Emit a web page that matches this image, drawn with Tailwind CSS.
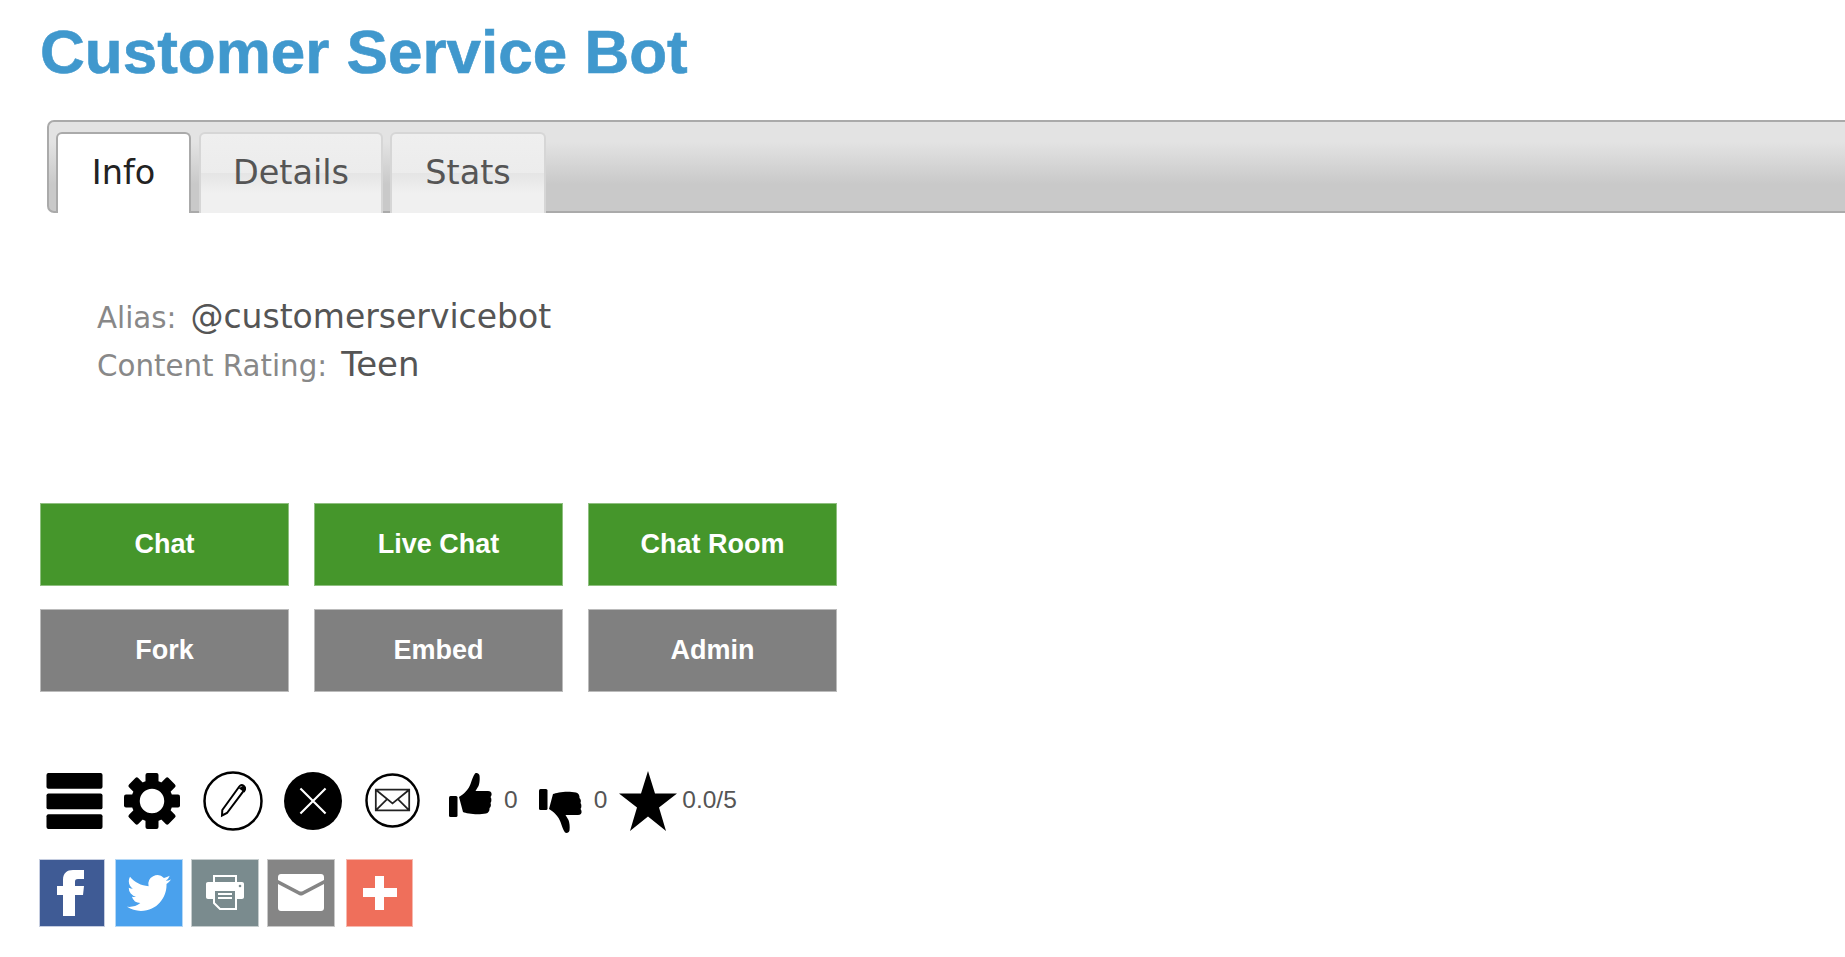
<!DOCTYPE html>
<html lang="en">
<head>
    <meta charset="UTF-8">
    <title>Customer Service Bot</title>
    <script src="https://cdn.jsdelivr.net/npm/@tailwindcss/browser@4"></script>
</head>
<body class="bg-white overflow-hidden font-['Liberation_Sans',sans-serif]">
    <div class="pl-[40px] pt-[17px]">
        <h1 class="text-[62px] leading-[69px] font-bold text-[#4098cd] [-webkit-text-stroke:0.6px_#4098cd]">Customer Service Bot</h1>

        <!-- Tabs -->
        <div class="ml-[7px] mr-[-10px] mt-[34px] h-[93px] flex gap-[8px] pl-[7px] pt-[10px] border-2 border-[#aaaaaa] rounded-[7px] bg-[linear-gradient(#e3e3e3_0%,#e3e3e3_22%,#c9c9c9_70%,#c9c9c9_100%)] font-['DejaVu_Sans',sans-serif] text-[33.500px]">
            <a class="w-[135px] h-[81px] flex items-center justify-center bg-white border-2 border-b-0 border-[#aaaaaa] rounded-t-[6px] text-[#222222]">Info</a>
            <a class="w-[184px] h-[81px] flex items-center justify-center bg-[linear-gradient(#efefef_0%,#ececec_50%,#e5e5e5_50%,#f0f0f0_75%,#f0f0f0_100%)] border-2 border-b-0 border-[#d6d6d6] rounded-t-[6px] text-[#555555]">Details</a>
            <a class="-ml-[1px] w-[156px] h-[81px] flex items-center justify-center bg-[linear-gradient(#efefef_0%,#ececec_50%,#e5e5e5_50%,#f0f0f0_75%,#f0f0f0_100%)] border-2 border-b-0 border-[#d6d6d6] rounded-t-[6px] text-[#555555]">Stats</a>
        </div>

        <!-- Info -->
        <div class="pl-[57px] pt-[81px] font-['DejaVu_Sans',sans-serif] text-[#555555] text-[33px] leading-[46px]">
            <div class="flex items-baseline gap-[14px]"><span class="text-[29.300px] text-[#888888]">Alias:</span><span>@customerservicebot</span></div>
            <div class="flex items-baseline gap-[14px]"><span class="text-[29.300px] text-[#888888]">Content Rating:</span><span class="text-[34px]">Teen</span></div>
        </div>

        <!-- Buttons -->
        <div class="mt-[113.500px] grid grid-cols-[249px_249px_249px] gap-x-[25px] gap-y-[23px] text-[27px] font-bold text-white">
            <a class="h-[83px] flex items-center justify-center bg-[#45962b] border border-[#8fbf80]">Chat</a>
            <a class="h-[83px] flex items-center justify-center bg-[#45962b] border border-[#8fbf80]">Live Chat</a>
            <a class="h-[83px] flex items-center justify-center bg-[#45962b] border border-[#8fbf80]">Chat Room</a>
            <a class="h-[83px] flex items-center justify-center bg-[#808080] border border-[#bbbbbb]">Fork</a>
            <a class="h-[83px] flex items-center justify-center bg-[#808080] border border-[#bbbbbb]">Embed</a>
            <a class="h-[83px] flex items-center justify-center bg-[#808080] border border-[#bbbbbb]">Admin</a>
        </div>

        <!-- Action icons -->
        <div class="mt-[77px] h-[64px] flex items-center text-[24.500px] text-[#555555]">
            <svg class="ml-[6px] w-[57px] h-[57px]" viewBox="0 0 57 58"><rect x="0" y="1" width="57" height="16" rx="2"/><rect x="0" y="22" width="57" height="16" rx="2"/><rect x="0" y="43" width="57" height="15" rx="2"/></svg>
            <svg class="ml-[21px] w-[56px] h-[58px]" viewBox="0 0 56 56"><g transform="translate(28 28)"><circle r="16.500" fill="none" stroke="#000" stroke-width="8.500"/><rect x="-6.500" y="-28" width="13" height="11" rx="2"/><rect x="-6.500" y="-28" width="13" height="11" rx="2" transform="rotate(45)"/><rect x="-6.500" y="-28" width="13" height="11" rx="2" transform="rotate(90)"/><rect x="-6.500" y="-28" width="13" height="11" rx="2" transform="rotate(135)"/><rect x="-6.500" y="-28" width="13" height="11" rx="2" transform="rotate(180)"/><rect x="-6.500" y="-28" width="13" height="11" rx="2" transform="rotate(225)"/><rect x="-6.500" y="-28" width="13" height="11" rx="2" transform="rotate(270)"/><rect x="-6.500" y="-28" width="13" height="11" rx="2" transform="rotate(315)"/></g></svg>
            <svg class="ml-[23px] w-[60px] h-[60px]" viewBox="0 0 60 60"><circle cx="30" cy="30" r="28.500" fill="none" stroke="#000" stroke-width="2.500"/><path d="M19 44.500l.3-5.500 17-23.500c1.200-1.600 3-1.800 4.400-.8s1.600 2.900.5 4.400L24 42z" fill="none" stroke="#000" stroke-width="2"/><path d="M35.500 17l6 4.400 1-1.600c1-1.600.7-3.300-.6-4.300s-3-.8-4.200.7z"/></svg>
            <svg class="ml-[21px] w-[58px] h-[58px]" viewBox="0 0 60 60"><circle cx="30" cy="30" r="30"/><path d="M17 17l26 26M43 17L17 43" stroke="#fff" stroke-width="2.200"/></svg>
            <svg class="ml-[23px] w-[55px] h-[55px]" viewBox="0 0 56 56"><circle cx="28" cy="28" r="26.500" fill="none" stroke="#000" stroke-width="2.500"/><path d="M11 17h34v21H11zM11 17l17 14 17-14M11 38l11-11M45 38L34 27" fill="none" stroke="#222" stroke-width="1.800"/></svg>
            <svg class="ml-[29px] w-[44px] h-[46px] self-start mt-[4px]" viewBox="0 0 44 46"><rect x="0" y="23" width="8.500" height="21" rx="1.500"/><path d="M10 24C15 21 20 16 21.500 11 23 7 24 3 26 .5c2-1 4 0 4.500 2 .5 4 0 8-1 10.500l-3 5h12.500c2.500 0 4 1.500 3.500 4-.2 1-.6 1.500-1 2 1.200 1.500 1.200 4.500 0 6 .8 2 .3 4-1 5 .3 2.500-1 5-3.500 5.500-5 1-12 1-17 0-3-.5-4.500-1-6-1.500z"/></svg>
            <span class="ml-[11px]">0</span>
            <svg class="ml-[21px] w-[44px] h-[46px] self-start mt-[19px]" viewBox="0 0 44 46"><g transform="matrix(1 0 0 -1 0 45)"><rect x="0" y="23" width="8.500" height="21" rx="1.500"/><path d="M10 24C15 21 20 16 21.500 11 23 7 24 3 26 .5c2-1 4 0 4.500 2 .5 4 0 8-1 10.500l-3 5h12.500c2.500 0 4 1.500 3.500 4-.2 1-.6 1.500-1 2 1.200 1.500 1.200 4.500 0 6 .8 2 .3 4-1 5 .3 2.500-1 5-3.500 5.500-5 1-12 1-17 0-3-.5-4.500-1-6-1.500z"/></g></svg>
            <span class="ml-[11px]">0</span>
            <svg class="ml-[12px] w-[58px] h-[60px]" viewBox="0 0 58 60"><path d="M29 0l7 22.500h22l-18 14 7 23.500-18-14.500L11 60l7-23.500-18-14h22z"/></svg>
            <span class="ml-[5px]">0.0/5</span>
        </div>

        <!-- Share icons -->
        <div class="mt-[26px] -ml-[1px] flex">
            <a class="w-[66px] h-[68px] bg-[#3f5b95] border border-[#c5cde0]"><svg class="w-full h-full" viewBox="0 0 64 66" fill="#fff"><path d="M23 56V35H17V26H23V20C23 13 27 10 33 10h11v9h-6c-2.500 0-3 1-3 3v4h9l-1 9h-8v21z"/></svg></a>
            <a class="ml-[10px] w-[68px] h-[68px] flex items-center justify-center bg-[#4aa1ed] border border-[#b5d8f6]"><svg class="w-[44px] h-[44px]" viewBox="0 0 24 24" fill="#fff"><path d="M23.953 4.570a10 10 0 01-2.825.775 4.958 4.958 0 002.163-2.723c-.951.555-2.005.959-3.127 1.184a4.920 4.920 0 00-8.384 4.482C7.690 8.095 4.067 6.130 1.640 3.162a4.822 4.822 0 00-.666 2.475c0 1.710.870 3.213 2.188 4.096a4.904 4.904 0 01-2.228-.616v.060a4.923 4.923 0 003.946 4.827 4.996 4.996 0 01-2.212.085 4.936 4.936 0 004.604 3.417 9.867 9.867 0 01-6.102 2.105c-.390 0-.779-.023-1.170-.067a13.995 13.995 0 007.557 2.209c9.053 0 13.998-7.496 13.998-13.985 0-.210 0-.420-.015-.630A9.935 9.935 0 0024 4.590z"/></svg></a>
            <a class="ml-[8px] w-[68px] h-[68px] flex items-center justify-center bg-[#7a8b8e] border border-[#c6cdce]"><svg class="w-[38px] h-[35px]" viewBox="0 0 38 35"><rect x="8" y="1" width="22" height="9" fill="none" stroke="#fff" stroke-width="2"/><path d="M2 7h34c1.200 0 2 .8 2 2v13c0 1-.8 2-2 2h-5V14H7v10H2c-1.200 0-2-.8-2-2V9c0-1.200.8-2 2-2z" fill="#fff"/><circle cx="34" cy="11" r="1.300" fill="#7a8b8e"/><path d="M8 15h22v19H14l-6-6z" fill="none" stroke="#fff" stroke-width="2"/><path d="M12 19h14M12 23h14" stroke="#fff" stroke-width="1.800"/></svg></a>
            <a class="ml-[8px] w-[68px] h-[68px] flex items-center justify-center bg-[#858585] border border-[#c8c8c8]"><svg class="w-[46px] h-[37px]" viewBox="0 0 46 37"><path d="M3 0h40c1.700 0 3 1.300 3 3v3L25 17c-1.300.7-2.700.7-4 0L0 6V3c0-1.700 1.300-3 3-3z" fill="#fff"/><path d="M0 10l21 11c1.300.7 2.700.7 4 0l21-11v24c0 1.700-1.300 3-3 3H3c-1.700 0-3-1.300-3-3z" fill="#fff"/></svg></a>
            <a class="ml-[11px] w-[67px] h-[68px] flex items-center justify-center bg-[#ef6f5b] border border-[#f7b9af]"><svg class="w-[34px] h-[34px]" viewBox="0 0 34 34" fill="#fff"><path d="M12 0h9v12h13v9H21v13h-9V21H0v-9h12z"/></svg></a>
        </div>
    </div>
</body>
</html>
